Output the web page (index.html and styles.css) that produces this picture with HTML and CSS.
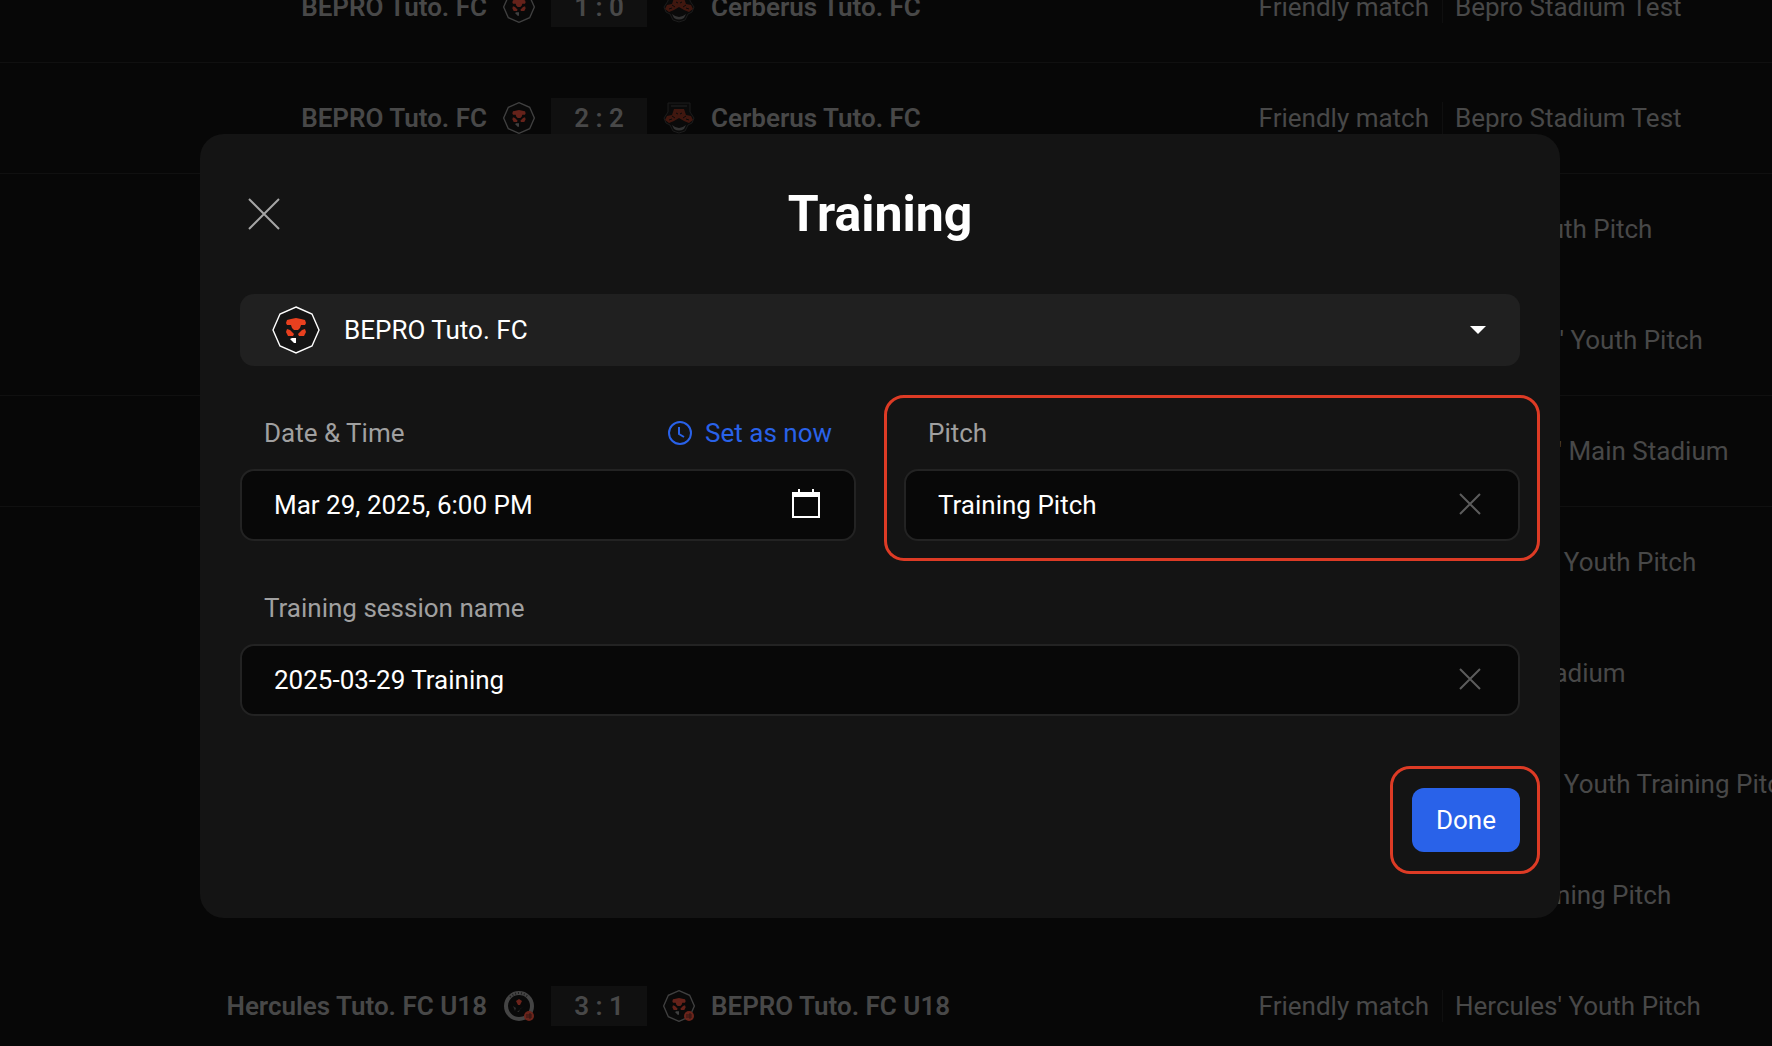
FILE: index.html
```html
<!DOCTYPE html>
<html lang="en">
<head>
    <meta charset="UTF-8">
    <meta name="viewport" content="width=device-width, initial-scale=1.0">
    <title>Training</title>
    <link rel="stylesheet" href="styles.css">
</head>
<body>
    <!-- club crests, reused below -->
    <svg class="defs" width="0" height="0" aria-hidden="true">
        <symbol id="bepro" viewBox="0 0 48 48">
            <path d="M24 1 40 8 47 24 40 40 24 47 8 40 1 24 8 8Z" fill="var(--crest-bg)" stroke="var(--crest-line)" stroke-width="var(--crest-stroke)"/>
            <path d="M15 14 19 13 24 12 29 13 33 14 34 17 33 19 29 19 28 22 26 24H22L20 22 19 19 15 19 14 17Z" fill="var(--crest-red)"/>
            <path d="M15 23 18 24 22 28 21 30H16L14 26Z M33 23 30 24 26 28 27 30H32L34 26Z" fill="var(--crest-red)"/>
            <path d="M18 33 20 32H24V37H22Z" fill="var(--crest-line)"/>
        </symbol>
        <symbol id="cerberus" viewBox="0 0 32 32">
            <path d="M5 10V1H27V10L31 16 29 21 25 23 22 29 16 31 10 29 7 23 3 21 1 16Z" fill="#0a0a0a" stroke="#1c1c1c"/>
            <path d="M8 4H24M11 8H21" stroke="#222" fill="none"/>
            <path d="M11 7H21L23 13 28 14 30 18 26 21 21 19 16 16 11 19 6 21 2 18 4 14 9 13Z" fill="#40170f"/>
            <path d="M6 18 9 17M26 18 23 17M13 11 15 12M19 11 17 12M9 14 12 16M23 14 20 16" stroke="#0a0a0a" fill="none"/>
            <path d="M9 23Q16 29 23 23L21 27Q16 30 11 27Z" fill="#333"/>
        </symbol>
        <symbol id="hercules" viewBox="0 0 32 32">
            <circle cx="16" cy="16" r="13" fill="#090909" stroke="#444" stroke-width="4"/>
            <path d="M7 7Q16 -1 25 7" fill="none" stroke="#202020" stroke-width="2" stroke-dasharray="1 2"/>
            <path d="M16 9 19 11 17 15H15L13 11Z" fill="#6b231b"/>
            <path d="M10 16 13 18 12 21ZM21 16 17 19 16 22H14" fill="#2e2e2e"/>
        </symbol>
        <symbol id="youth" viewBox="0 0 12 12">
            <circle cx="6" cy="6" r="5" fill="#6b241b"/>
            <path d="M4 4V8M6 4H8V8H6V4M6 6H8" stroke="#2d1512" fill="none"/>
        </symbol>
    </svg>

    <main class="matches">
        <div class="match line">
            <b class="home">BEPRO Tuto. FC</b>
            <div class="result">
                <svg class="crest"><use href="#bepro"/></svg>
                <b class="score">1 : 0</b>
                <svg class="crest"><use href="#cerberus"/></svg>
            </div>
            <div class="info">
                <b class="away">Cerberus Tuto. FC</b>
                <span class="type">Friendly match</span>
                <span class="venue">Bepro Stadium Test</span>
            </div>
        </div>
        <div class="match line">
            <b class="home">BEPRO Tuto. FC</b>
            <div class="result">
                <svg class="crest"><use href="#bepro"/></svg>
                <b class="score">2 : 2</b>
                <svg class="crest"><use href="#cerberus"/></svg>
            </div>
            <div class="info">
                <b class="away">Cerberus Tuto. FC</b>
                <span class="type">Friendly match</span>
                <span class="venue">Bepro Stadium Test</span>
            </div>
        </div>
        <div class="match"><div class="info"><span class="venue">Tuto. Youth Pitch</span></div></div>
        <div class="match line"><div class="info"><span class="venue">Cerberus' Youth Pitch</span></div></div>
        <div class="match line"><div class="info"><span class="venue">Hercules' Main Stadium</span></div></div>
        <div class="match"><div class="info"><span class="venue">Hercules Youth Pitch</span></div></div>
        <div class="match"><div class="info"><span class="venue">Bepro Stadium</span></div></div>
        <div class="match"><div class="info"><span class="venue">Hercules Youth Training Pitch</span></div></div>
        <div class="match"><div class="info"><span class="venue">Tuto Training Pitch</span></div></div>
        <div class="match">
            <b class="home">Hercules Tuto. FC U18</b>
            <div class="result">
                <span class="crest"><svg class="crest"><use href="#hercules"/></svg><svg class="youth"><use href="#youth"/></svg></span>
                <b class="score">3 : 1</b>
                <span class="crest"><svg class="crest"><use href="#bepro"/></svg><svg class="youth"><use href="#youth"/></svg></span>
            </div>
            <div class="info">
                <b class="away">BEPRO Tuto. FC U18</b>
                <span class="type">Friendly match</span>
                <span class="venue">Hercules' Youth Pitch</span>
            </div>
        </div>
    </main>

    <div class="overlay">
        <form class="modal" role="dialog" aria-labelledby="title">
            <div class="modal-head">
                <button type="button" class="close" aria-label="Close">
                    <svg width="32" height="32" viewBox="0 0 32 32"><path d="M1 1 31 31M31 1 1 31"/></svg>
                </button>
                <h1 id="title">Training</h1>
            </div>

            <div class="team">
                <svg class="team-crest"><use href="#bepro"/></svg>
                <select aria-label="Team">
                    <option>BEPRO Tuto. FC</option>
                </select>
                <svg class="caret" width="16" height="8" viewBox="0 0 16 8"><path d="M0 0H16L8 8Z"/></svg>
            </div>

            <div class="fields">
                <div class="field">
                    <div class="label-row">
                        <label for="date">Date &amp; Time</label>
                        <button type="button" class="now">
                            <svg width="24" height="24" viewBox="0 0 24 24"><circle cx="12" cy="12" r="11"/><path d="M11 6V13L16 16"/></svg>
                            Set as now
                        </button>
                    </div>
                    <div class="box">
                        <input type="text" id="date" value="Mar 29, 2025, 6:00 PM">
                        <button type="button" class="icon calendar" aria-label="Open calendar">
                            <svg width="28" height="29" viewBox="0 0 28 29"><path d="M0 3H6V0H8V3H20V0H22V3H28V29H0ZM2 8V27H26V8Z" fill-rule="evenodd"/></svg>
                        </button>
                    </div>
                </div>
                <div class="field">
                    <div class="label-row">
                        <label for="pitch">Pitch</label>
                    </div>
                    <div class="box">
                        <input type="text" id="pitch" value="Training Pitch">
                        <button type="button" class="icon clear" aria-label="Clear pitch">
                            <svg width="22" height="22" viewBox="0 0 22 22"><path d="M1 1 21 21M21 1 1 21"/></svg>
                        </button>
                    </div>
                    <span class="mark mark-pitch"></span>
                </div>
            </div>

            <div class="field">
                <div class="label-row">
                    <label for="name">Training session name</label>
                </div>
                <div class="box">
                    <input type="text" id="name" value="2025-03-29 Training">
                    <button type="button" class="icon clear" aria-label="Clear name">
                        <svg width="22" height="22" viewBox="0 0 22 22"><path d="M1 1 21 21M21 1 1 21"/></svg>
                    </button>
                </div>
            </div>

            <div class="actions">
                <div class="done-wrap">
                    <button type="button" class="done">Done</button>
                    <span class="mark mark-done"></span>
                </div>
            </div>
        </form>
    </div>
</body>
</html>
```
FILE: styles.css
```css
*{
    box-sizing: border-box;
}
body{
    margin: 0;
    height: 100vh;
    overflow: hidden;
    background: #070707;
    color: #484848;
    font-family: Roboto, "Liberation Sans", sans-serif;
    font-size: 26px;
    line-height: 32px;
}
button, input, select{
    font: inherit;
    color: inherit;
    background: none;
    border: 0;
    padding: 0;
    margin: 0;
}
svg{
    display: block;
}
.defs{
    position: absolute;
}

/* match list, scrolled half a row down */
.matches{
    margin-top: -48px;
    --crest-bg: #090909;
    --crest-line: #404040;
    --crest-red: #65221a;
    --crest-stroke: 2px;
}
.match{
    display: grid;
    grid-template-columns: 487fr 224px 1061fr;
    align-items: center;
    height: 111px;
    border-bottom: 1px solid transparent;
    white-space: nowrap;
}
.line{
    border-bottom-color: #101010;
}
.match b{
    font-weight: 600;
}
.home{
    text-align: right;
}
.result{
    display: flex;
    align-items: center;
    justify-content: center;
    gap: 16px;
}
.crest{
    position: relative;
    width: 32px;
    height: 32px;
}
.youth{
    position: absolute;
    right: 0;
    bottom: 0;
    width: 12px;
    height: 12px;
}
.score{
    width: 96px;
    background: #101010;
    text-align: center;
    line-height: 40px;
}
.info{
    grid-column: 3;
    display: flex;
    justify-content: flex-end;
}
.away{
    flex: 1;
}
.type{
    padding-right: 13px;
}
.venue{
    flex: none;
    width: 31.1%;
    padding-left: 12px;
    border-left: 1px solid #0f0f0f;
}

.overlay{
    position: fixed;
    inset: 0;
    display: flex;
    align-items: center;
    padding: 6px 212px 0 200px;
}
.modal{
    width: 100%;
    padding: 40px 40px 66px;
    border-radius: 24px;
    background: #141414;
    color: #fff;
}
.modal-head{
    display: grid;
    grid-template-columns: 48px 1fr 48px;
    align-items: center;
    height: 80px;
    margin-bottom: 40px;
}
.modal-head h1{
    margin: 0;
    font-size: 50px;
    font-weight: 700;
    line-height: 60px;
    text-align: center;
}
.close{
    padding: 8px;
}
.close path{
    stroke: #a6a6a6;
    stroke-width: 2;
}

.team{
    position: relative;
    --crest-bg: #141414;
    --crest-line: #fff;
    --crest-red: #e8401f;
    --crest-stroke: 1.4px;
}
.team select{
    display: block;
    width: 100%;
    height: 72px;
    padding: 0 104px;
    border-radius: 14px;
    background: #202020;
    appearance: none;
}
.team-crest{
    position: absolute;
    left: 32px;
    top: 12px;
    width: 48px;
    height: 48px;
}
.caret{
    position: absolute;
    right: 34px;
    top: 32px;
    fill: #fff;
}

.fields{
    display: grid;
    grid-template-columns: 1fr 1fr;
    gap: 48px;
}
.field{
    position: relative;
    padding-top: 47px;
}
.label-row{
    display: flex;
    align-items: center;
    justify-content: space-between;
    height: 40px;
    margin-bottom: 16px;
    padding: 0 24px;
    color: #a0a0a0;
}
.now{
    display: flex;
    align-items: center;
    gap: 13px;
    color: #2962e9;
}
.now svg{
    fill: none;
    stroke: #2962e9;
    stroke-width: 2;
}
.box{
    display: flex;
    align-items: center;
    height: 72px;
    padding: 0 32px;
    border: 2px solid #232323;
    border-radius: 14px;
    background: #080808;
}
.box input{
    flex: 1;
    min-width: 0;
    outline: 0;
}
.icon{
    display: flex;
    justify-content: center;
    width: 32px;
    padding-bottom: 3px;
}
.calendar path{
    fill: #fff;
}
.clear path{
    stroke: #5c5c5c;
    stroke-width: 2;
}

.actions{
    display: flex;
    justify-content: flex-end;
    margin-top: 72px;
}
.done-wrap{
    position: relative;
}
.done{
    display: block;
    height: 64px;
    padding: 0 24px;
    border-radius: 12px;
    background: #2962e9;
}

/* red highlight outlines */
.mark{
    position: absolute;
    border: 3px solid #dd3b25;
    border-radius: 20px;
    pointer-events: none;
}
.mark-pitch{
    inset: 29px -20px -20px;
}
.mark-done{
    inset: -22px -20px -22px -22px;
}
```
